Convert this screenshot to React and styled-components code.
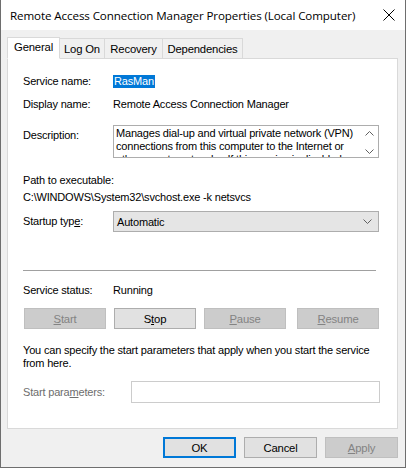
import React from "react";
import styled, { createGlobalStyle } from "styled-components";

const Global = createGlobalStyle`
  html, body { margin: 0; padding: 0; background: #f0f0f0; }
  body { font-family: "Liberation Sans", Arial, sans-serif; font-size: 11px; letter-spacing: -0.18px; color: #000; }
  * { box-sizing: border-box; }
`;

const Window = styled.div`
  width: 406px;
  height: 468px;
  background: #f0f0f0;
  border: 1px solid #6e6e6e;
  border-top: none;
  display: flex;
  flex-direction: column;
  overflow: hidden;
`;

const TitleBar = styled.div`
  height: 30px;
  background: #fff;
  display: flex;
  align-items: center;
  justify-content: space-between;
  padding: 0 9px 0 9px;
`;

const Title = styled.div`
  font-family: "Open Sans", "Noto Sans", sans-serif;
  font-size: 11.6px;
  letter-spacing: -0.1px;
  color: #000;
  white-space: nowrap;
`;

const Close = styled.div`
  width: 12px;
  height: 12px;
  display: flex;
  margin-right: 1px;
`;

const TabStrip = styled.div`
  display: flex;
  align-items: flex-end;
  height: 28px;
  padding-left: 6px;
  position: relative;
  z-index: 1;
`;

const Tab = styled.div`
  height: ${(p) => (p.$active ? 22 : 20)}px;
  display: flex;
  align-items: center;
  justify-content: center;
  white-space: nowrap;
  border: 1px solid #d9d9d9;
  border-bottom: ${(p) => (p.$active ? "1px solid #fff" : "none")};
  border-left: ${(p) => (p.$first || p.$active ? "1px solid #d9d9d9" : "none")};
  background: ${(p) => (p.$active ? "#fff" : "#f0f0f0")};
  margin-bottom: ${(p) => (p.$active ? -1 : 0)}px;
  width: ${(p) => p.$w}px;
  font-size: 11.3px;
  padding-bottom: ${(p) => (p.$active ? 2 : 0)}px;
`;

const Panel = styled.div`
  margin-left: 6px;
  width: 391px;
  height: 371px;
  background: #fff;
  border: 1px solid #d9d9d9;
  padding: 16px 0 0 15px;
  display: flex;
  flex-direction: column;
`;

const Row = styled.div`
  display: flex;
  align-items: ${(p) => p.$align || "center"};
  margin-top: ${(p) => p.$mt || 0}px;
`;

const Label = styled.div`
  width: ${(p) => p.$w || 90}px;
  flex: none;
  line-height: 13px;
  color: ${(p) => (p.$disabled ? "#6d6d6d" : "#000")};
  padding-top: ${(p) => p.$pt || 0}px;
`;

const Value = styled.div`
  line-height: 13px;
  white-space: nowrap;
`;

const Selected = styled.span`
  background: #0078d7;
  color: #fff;
  padding: 0 1px;
  line-height: 13px;
  display: inline-block;
`;

const DescBox = styled.div`
  width: 266px;
  height: 33px;
  border: 1px solid #adadad;
  display: flex;
  overflow: hidden;
`;

const DescText = styled.div`
  flex: 1;
  padding: 1px 0 0 2px;
  line-height: 13px;
  overflow: hidden;
`;

const ScrollCol = styled.div`
  width: 17px;
  flex: none;
  display: flex;
  flex-direction: column;
  align-items: center;
  justify-content: space-between;
  padding: 5px 0 3px;
`;

const Combo = styled.div`
  width: 266px;
  height: 21px;
  background: #e5e5e5;
  border: 1px solid #adadad;
  display: flex;
  align-items: center;
  justify-content: space-between;
  padding: 0 6px 0 3px;
`;

const Separator = styled.div`
  width: 353px;
  height: 1px;
  background: #a0a0a0;
  margin-top: ${(p) => p.$mt}px;
`;

const ButtonRow = styled.div`
  display: flex;
  gap: ${(p) => p.$gap || 8}px;
  margin-top: ${(p) => p.$mt || 0}px;
`;

const Button = styled.div`
  width: ${(p) => p.$w || 82}px;
  height: 21px;
  display: flex;
  align-items: center;
  justify-content: center;
  font-size: 11.3px;
  background: ${(p) => (p.$disabled ? "#cccccc" : "#e1e1e1")};
  border: ${(p) => (p.$default ? "2px solid #0078d7" : p.$disabled ? "1px solid #bfbfbf" : "1px solid #adadad")};
  color: ${(p) => (p.$disabled ? "#838383" : "#000")};
  margin-left: ${(p) => p.$ml || 0}px;
`;

const U = styled.span`
  text-decoration: underline;
  text-underline-offset: 1px;
`;

const Para = styled.div`
  margin-top: ${(p) => p.$mt}px;
  line-height: 13px;
  width: 360px;
`;

const Input = styled.div`
  width: 249px;
  height: 22px;
  border: 1px solid #cccccc;
  background: #fff;
`;

const Footer = styled.div`
  display: flex;
  justify-content: flex-end;
  gap: 8px;
  padding: 8px 7px 0 0;
`;

const Chevron = ({ up, w = 9, h = 5 }) => (
  <svg width={w} height={h} viewBox="0 0 9 5">
    <path
      d={up ? "M0.5 4.5 L4.5 0.5 L8.5 4.5" : "M0.5 0.5 L4.5 4.5 L8.5 0.5"}
      fill="none"
      stroke="#606060"
      strokeWidth="1"
    />
  </svg>
);

export default function App() {
  return (
    <>
      <Global />
      <Window>
        <TitleBar>
          <Title>Remote Access Connection Manager Properties (Local Computer)</Title>
          <Close>
            <svg width="12" height="12" viewBox="0 0 12 12">
              <path d="M0.5 0.5 L11.5 11.5 M11.5 0.5 L0.5 11.5" stroke="#000" strokeWidth="1" />
            </svg>
          </Close>
        </TitleBar>
        <TabStrip>
          <Tab $active $first $w={53}>General</Tab>
          <Tab $w={45}>Log On</Tab>
          <Tab $w={58}>Recovery</Tab>
          <Tab $w={80}>Dependencies</Tab>
        </TabStrip>
        <Panel>
          <Row>
            <Label>Service name:</Label>
            <Value>
              <Selected>RasMan</Selected>
            </Value>
          </Row>
          <Row $mt={10}>
            <Label>Display name:</Label>
            <Value>Remote Access Connection Manager</Value>
          </Row>
          <Row $mt={14} $align="flex-start">
            <Label $pt={4}>Description:</Label>
            <DescBox>
              <DescText>
                Manages dial-up and virtual private network (VPN) connections from this computer to the Internet or
                other remote networks. If this service is disabled, any services that explicitly depend on it will fail
                to start.
              </DescText>
              <ScrollCol>
                <Chevron up />
                <Chevron />
              </ScrollCol>
            </DescBox>
          </Row>
          <Row $mt={16}>
            <Label $w={200}>Path to executable:</Label>
          </Row>
          <Row $mt={4}>
            <Value>C:\WINDOWS\System32\svchost.exe -k netsvcs</Value>
          </Row>
          <Row $mt={7}>
            <Label>
              Startup typ<U>e</U>:
            </Label>
            <Combo>
              <span>Automatic</span>
              <Chevron w={9} h={5} />
            </Combo>
          </Row>
          <Separator $mt={38} />
          <Row $mt={13}>
            <Label>Service status:</Label>
            <Value>Running</Value>
          </Row>
          <ButtonRow $mt={11} $gap={8}>
            <Button $disabled $ml={1}>
              <U>S</U>tart
            </Button>
            <Button>
              S<U>t</U>op
            </Button>
            <Button $disabled>
              <U>P</U>ause
            </Button>
            <Button $disabled $ml={3}>
              <U>R</U>esume
            </Button>
          </ButtonRow>
          <Para $mt={15}>
            You can specify the start parameters that apply when you start the service from here.
          </Para>
          <Row $mt={11}>
            <Label $w={108} $disabled>
              Start para<U>m</U>eters:
            </Label>
            <Input />
          </Row>
        </Panel>
        <Footer>
          <Button $default $w={73}>OK</Button>
          <Button $w={73}>Cancel</Button>
          <Button $disabled $w={73}>
            <U>A</U>pply
          </Button>
        </Footer>
      </Window>
    </>
  );
}
